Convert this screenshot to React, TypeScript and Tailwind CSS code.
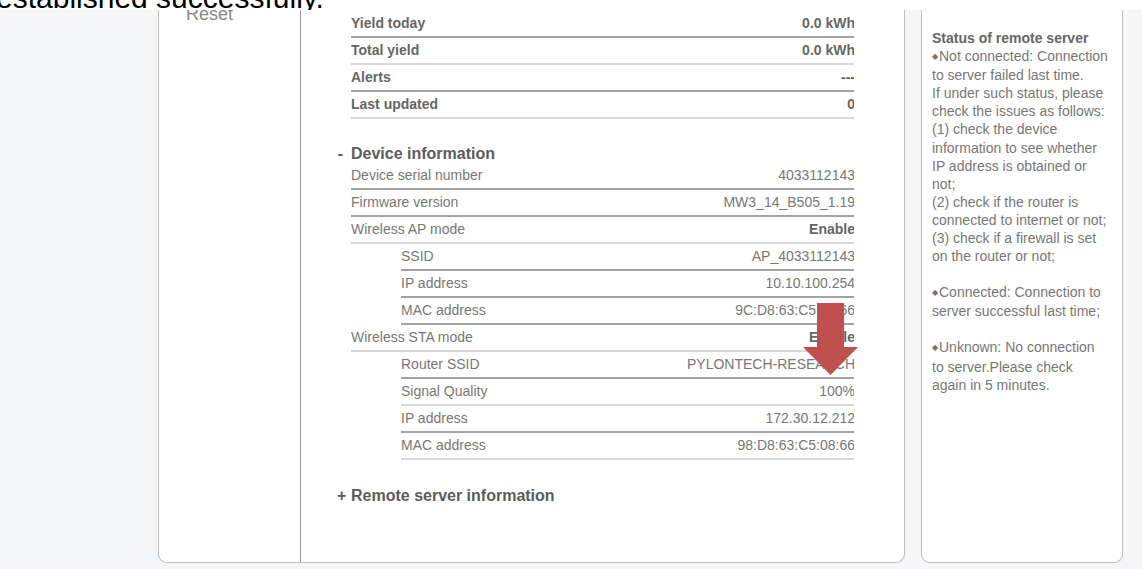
type Tone = "dark" | "light";

interface InfoRow {
  label: string;
  value: string;
  sub?: boolean;
  strong?: boolean;
  tone: Tone;
}

const yieldRows: InfoRow[] = [
  { label: "Yield today", value: "0.0 kWh", tone: "dark" },
  { label: "Total yield", value: "0.0 kWh", tone: "light" },
  { label: "Alerts", value: "---", tone: "dark" },
  { label: "Last updated", value: "0", tone: "light" },
];

const deviceRows: InfoRow[] = [
  { label: "Device serial number", value: "4033112143", tone: "dark" },
  { label: "Firmware version", value: "MW3_14_B505_1.19", tone: "dark" },
  { label: "Wireless AP mode", value: "Enable", strong: true, tone: "light" },
  { label: "SSID", value: "AP_4033112143", sub: true, tone: "dark" },
  { label: "IP address", value: "10.10.100.254", sub: true, tone: "dark" },
  { label: "MAC address", value: "9C:D8:63:C5:08:66", sub: true, tone: "dark" },
  { label: "Wireless STA mode", value: "Enable", strong: true, tone: "light" },
  { label: "Router SSID", value: "PYLONTECH-RESEARCH", sub: true, tone: "dark" },
  { label: "Signal Quality", value: "100%", sub: true, tone: "light" },
  { label: "IP address", value: "172.30.12.212", sub: true, tone: "dark" },
  { label: "MAC address", value: "98:D8:63:C5:08:66", sub: true, tone: "light" },
];

const font = "font-['Liberation_Sans',Arial,sans-serif]";

function Row({ row, bold }: { row: InfoRow; bold?: boolean }) {
  const line = row.tone === "dark" ? "border-[#a3a3a3]" : "border-[#d9d9d9]";
  return (
    <div
      className={`flex h-[27px] items-center justify-between overflow-hidden border-b-2 ${line} ${
        row.sub ? "ml-[50px]" : ""
      } ${bold ? "font-bold text-[#666]" : "text-[#777]"} text-[14px]`}
    >
      <span>{row.label}</span>
      <span className={`-mr-[1px] ${row.strong || bold ? "font-bold text-[#666]" : ""}`}>{row.value}</span>
    </div>
  );
}

function SectionTitle({ sign, title }: { sign: string; title: string }) {
  return (
    <div className="-ml-[14px] flex h-[18px] items-center gap-[7px] text-[16px] font-bold leading-[18px] text-[#5c5c5c]">
      <span className="w-[7px] text-center">{sign}</span>
      <span>{title}</span>
    </div>
  );
}

function DownArrow() {
  return (
    <svg width="55" height="72" viewBox="0 0 55 72" className="absolute left-[644px] top-[293px]">
      <rect x="14" y="0" width="27" height="45" fill="#c0504d" />
      <polygon points="0,44 55,44 27.5,72" fill="#c0504d" />
    </svg>
  );
}

function Bullet() {
  return <span className="mr-[1px] inline-block text-[8px] align-[2px]">◆</span>;
}

export default function App() {
  return (
    <div className={`h-[569px] w-[1142px] overflow-hidden bg-[#f5f6f8] ${font}`}>
      <div className="relative z-10 h-[10px] overflow-hidden bg-white">
        <div className="-ml-[4px] -mt-[17px] whitespace-nowrap text-[30px] leading-[30px] text-black">
          established successfully.
        </div>
      </div>

      <div className="flex h-[553px] gap-[16px] pl-[158px]">
        {/* main panel: side nav + details */}
        <div className="relative flex w-[747px] overflow-hidden rounded-b-[9px] border-x border-b border-[#bdbdbd] bg-white">
          <div className="w-[142px] shrink-0 border-r border-[#9e9e9e] pl-[27px]">
            <div className="-mt-[6px] text-[18px] leading-[20px] text-[#888]">Reset</div>
          </div>

          <div className="flex-1 px-[50px] pt-[1px]">
            {yieldRows.map((r) => (
              <Row key={r.label} row={r} bold />
            ))}

            <div className="mt-[26px]">
              <SectionTitle sign="-" title="Device information" />
            </div>
            {deviceRows.map((r, i) => (
              <Row key={i} row={r} />
            ))}

            <div className="mt-[27px]">
              <SectionTitle sign="+" title="Remote server information" />
            </div>
          </div>

          <DownArrow />
        </div>

        {/* help panel */}
        <div className="w-[202px] rounded-b-[9px] border-x border-b border-[#bdbdbd] bg-white pl-[10px] pr-[12px] pt-[19px] text-[14px] leading-[18.1px] text-[#777]">
          <div className="font-bold text-[#666]">Status of remote server</div>
          <p>
            <Bullet />
            Not connected: Connection to server failed last time.
          </p>
          <p>If under such status, please check the issues as follows:</p>
          <p>(1) check the device information to see whether IP address is obtained or not;</p>
          <p>(2) check if the router is connected to internet or not;</p>
          <p>(3) check if a firewall is set on the router or not;</p>
          <p className="mt-[18px]">
            <Bullet />
            Connected: Connection to server successful last time;
          </p>
          <p className="mt-[18px]">
            <Bullet />
            Unknown: No connection to server.Please check again in 5 minutes.
          </p>
        </div>
      </div>
    </div>
  );
}
